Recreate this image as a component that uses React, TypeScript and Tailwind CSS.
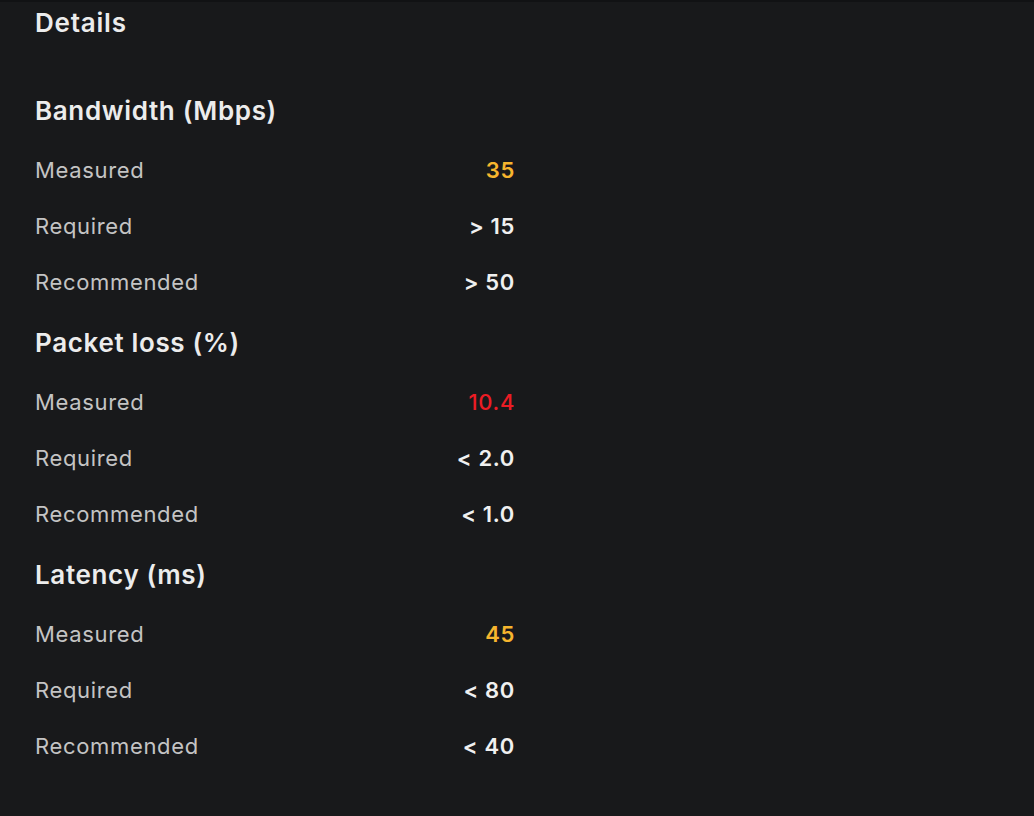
type Row = { label: string; value: string; tone?: 'warn' | 'bad' }

const SECTIONS: { title: string; rows: Row[] }[] = [
  {
    title: 'Bandwidth (Mbps)',
    rows: [
      { label: 'Measured', value: '35', tone: 'warn' },
      { label: 'Required', value: '> 15' },
      { label: 'Recommended', value: '> 50' },
    ],
  },
  {
    title: 'Packet loss (%)',
    rows: [
      { label: 'Measured', value: '10.4', tone: 'bad' },
      { label: 'Required', value: '< 2.0' },
      { label: 'Recommended', value: '< 1.0' },
    ],
  },
  {
    title: 'Latency (ms)',
    rows: [
      { label: 'Measured', value: '45', tone: 'warn' },
      { label: 'Required', value: '< 80' },
      { label: 'Recommended', value: '< 40' },
    ],
  },
]

const toneClass = (tone?: Row['tone']) => {
  if (tone === 'warn') return 'text-[#f6b52e] font-semibold'
  if (tone === 'bad') return 'text-[#ec1c24] font-medium'
  return 'text-[#f0f0f0] font-semibold'
}

export default function App() {
  return (
    <main className="min-h-screen w-full bg-[#18191b] font-['Inter',sans-serif] border-t-2 border-[#111214]">
      <div className="ml-[35px] flex w-[479px] flex-col">
        <h1 className="flex h-10 items-center text-[26px] font-semibold tracking-[0.03em] text-[#ececec]">
          Details
        </h1>
        <div className="mt-9 flex flex-col">
          {SECTIONS.map((section) => (
            <section key={section.title} className="flex flex-col">
              <h2 className="flex h-16 items-center text-[26px] font-semibold tracking-[0.025em] text-[#ececec]">
                {section.title}
              </h2>
              {section.rows.map((row, index) => (
                <div
                  key={`${row.label}-${index}`}
                  className="flex h-14 items-center justify-between text-[22px] tracking-[0.03em]"
                >
                  <span className="text-[#c4c4c4]">{row.label}</span>
                  <span className={`-mr-[1px] ${toneClass(row.tone)}`}>{row.value}</span>
                </div>
              ))}
            </section>
          ))}
        </div>
      </div>
    </main>
  )
}
